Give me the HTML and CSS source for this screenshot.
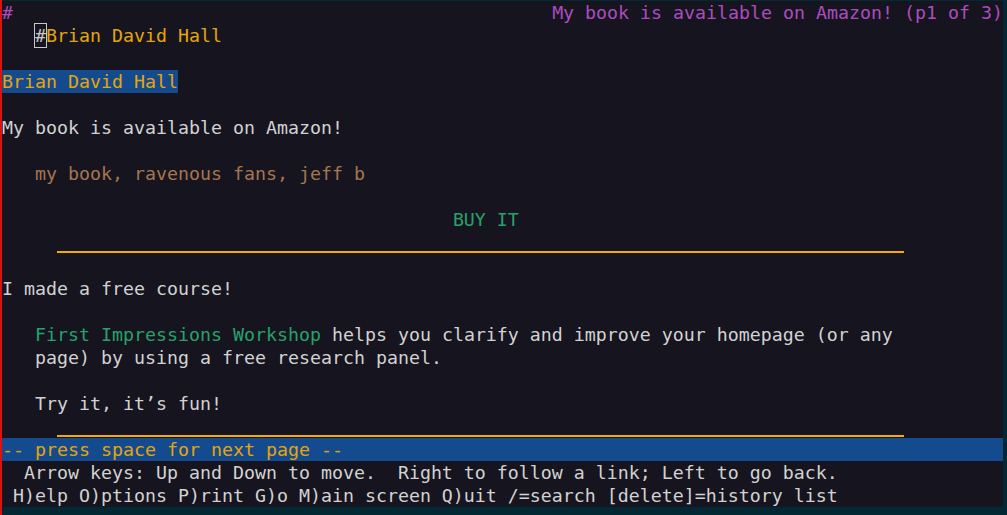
FILE: index.html
```html
<!DOCTYPE html>
<html>
<head>
<meta charset="utf-8">
<link rel="stylesheet" href="styles.css">
</head>
<body>
<div class="screen">
  <div class="term">
    <div class="row split"><span class="mag">#</span><span class="mag">My book is available on Amazon! (p1 of 3)</span></div>
    <div class="row">   <span class="cursor">#</span><span class="yel">Brian David Hall</span></div>
    <div class="row"></div>
    <div class="row"><span class="hl">Brian David Hall</span></div>
    <div class="row"></div>
    <div class="row">My book is available on Amazon!</div>
    <div class="row"></div>
    <div class="row"><span class="brown">   my book, ravenous fans, jeff b</span></div>
    <div class="row"></div>
    <div class="row">                                         <span class="grn">BUY IT</span></div>
    <div class="row"><div class="rule"></div></div>
    <div class="row"></div>
    <div class="row">I made a free course!</div>
    <div class="row"></div>
    <div class="row">   <span class="grn">First Impressions Workshop</span> helps you clarify and improve your homepage (or any</div>
    <div class="row">   page) by using a free research panel.</div>
    <div class="row"></div>
    <div class="row">   Try it, it’s fun!</div>
    <div class="row"><div class="rule"></div></div>
    <div class="row status">-- press space for next page --</div>
    <div class="row">  Arrow keys: Up and Down to move.  Right to follow a link; Left to go back.</div>
    <div class="row"> H)elp O)ptions P)rint G)o M)ain screen Q)uit /=search [delete]=history list</div>
  </div>
</div>
</body>
</html>
```
FILE: styles.css
```css
html, body {
  margin: 0;
  padding: 0;
  background: #022833;
}
.screen {
  width: 1005px;
  height: 515px;
  border-left: 2px solid #e01010;
  background: #022833;
  padding-top: 1px;
  box-sizing: border-box;
}
.term {
  width: 1001px;
  height: 506px;
  background: #16151f;
  font-family: "DejaVu Sans Mono", monospace;
  font-size: 18.27px;
  line-height: 23px;
  color: #d2d2d2;
}
.row {
  height: 23px;
  white-space: pre;
}
.split {
  display: flex;
  justify-content: space-between;
}
.mag { color: #ad4cbf; }
.yel { color: #e5a50a; }
.brown { color: #a6764f; }
.grn { color: #26a269; }
.cursor {
  display: inline-block;
  height: 23px;
  vertical-align: top;
  outline: 1px solid #c8c8c8;
  color: #c8c8c8;
}
.hl {
  display: inline-block;
  height: 23px;
  vertical-align: top;
  background: #144b8e;
  color: #e5a50a;
}
.rule {
  margin-left: 55px;
  width: 847px;
  height: 20px;
  border-bottom: 2px solid #f2ad00;
}
.status {
  background: #144b8e;
  color: #e5a50a;
}
```
